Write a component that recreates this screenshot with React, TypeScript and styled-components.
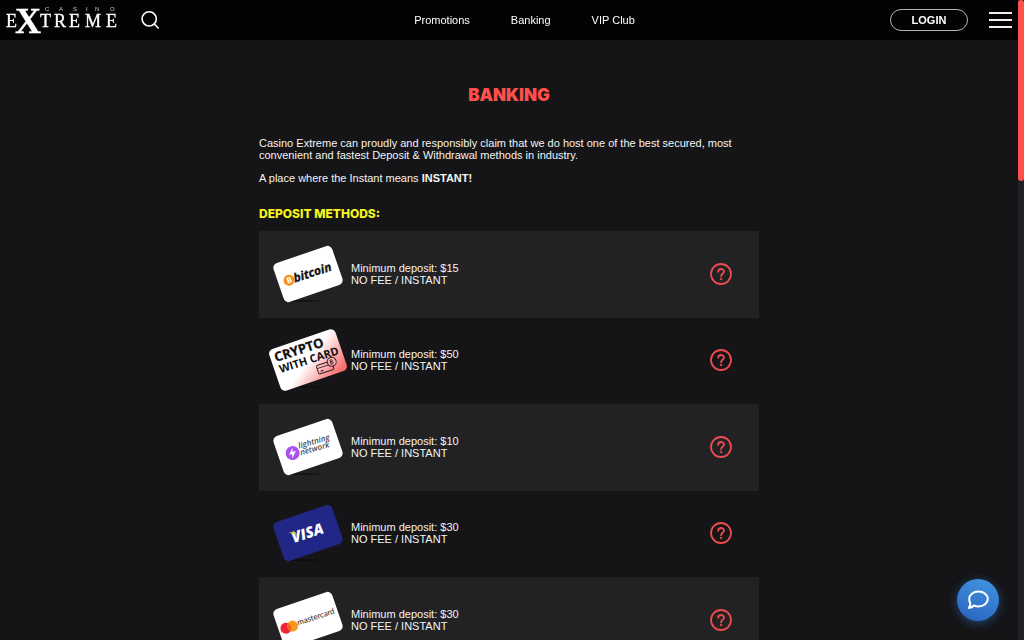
import React from "react";
import styled, { createGlobalStyle } from "styled-components";

const GlobalStyle = createGlobalStyle`
  * { box-sizing: border-box; }
  body {
    margin: 0;
    background: #151517;
    color: #f4f4f4;
    font: 11px/12px "Liberation Sans", Arial, sans-serif;
  }
`;

const Page = styled.div`
  height: 100vh;
  padding-right: 6px;
  overflow-y: auto;
  scrollbar-width: none;
`;

const Header = styled.header`
  position: sticky;
  top: 0;
  z-index: 2;
  display: flex;
  align-items: center;
  justify-content: space-between;
  height: 40px;
  padding: 0 6px;
  background: #030303;
`;

const Group = styled.div<{ $gap: number }>`
  display: flex;
  align-items: center;
  gap: ${(p) => p.$gap}px;
`;

const HomeLink = styled.a`
  display: block;
  height: 32px;
  color: #fff;
`;

const Nav = styled.nav`
  display: flex;
  gap: 41px;
`;

const NavLink = styled.a`
  color: #fff;
  text-decoration: none;
`;

const IconButton = styled.button`
  display: flex;
  align-items: center;
  justify-content: center;
  padding: 0;
  border: 0;
  background: none;
  color: inherit;
  cursor: pointer;
`;

const LoginButton = styled.button`
  width: 78px;
  height: 22px;
  padding: 0;
  border: 1px solid #b4b4b4;
  border-radius: 11px;
  background: transparent;
  color: #fff;
  font: bold 11px/12px "Liberation Sans", Arial, sans-serif;
  cursor: pointer;
`;

const Main = styled.main`
  max-width: 500px;
  margin: 0 auto;
  padding: 44px 0 40px;
`;

const Title = styled.h1`
  margin: 0 0 31px;
  color: #ff504c;
  font: 900 17px/22px Inter, "Liberation Sans", sans-serif;
  text-align: center;
`;

const Paragraph = styled.p`
  margin: 0 0 11px;
`;

const Subtitle = styled.h2`
  margin: 0 0 9px;
  padding-top: 11px;
  color: #f8f51c;
  font: 800 12px/16px Inter, "Liberation Sans", sans-serif;
`;

const MethodList = styled.ul`
  margin: 0;
  padding: 0;
  list-style: none;
`;

const MethodRow = styled.li`
  display: flex;
  align-items: center;
  height: 86px;
  padding: 0 27px 2px 9px;
  &:nth-child(odd) {
    height: 87px;
    background: #222224;
  }
`;

const MethodText = styled.p`
  flex: 1;
  margin: 0 0 0 3px;
`;

const HelpButton = styled(IconButton)`
  width: 22px;
  height: 22px;
  color: #ee4b4e;
`;

const ScrollTrack = styled.div`
  position: fixed;
  inset: 0 0 0 auto;
  z-index: 3;
  width: 6px;
  background: #1f2126;
`;

const ScrollThumb = styled.div`
  height: 181px;
  border-radius: 3px;
  background: #ff504c;
`;

const ChatButton = styled(IconButton)`
  position: fixed;
  right: 25px;
  bottom: 19px;
  width: 42px;
  height: 42px;
  border-radius: 50%;
  background: linear-gradient(200deg, #4296e0, #2a62c0);
  box-shadow: 0 2px 10px rgba(50, 120, 210, 0.5);
  color: #fff;
`;

const cardFont = '"Open Sans", "Noto Sans", sans-serif';

function Logo() {
  return (
    <svg width="112" height="32" viewBox="0 0 112 32" fill="#fff" role="img" aria-label="Casino Extreme" overflow="visible">
      <g fontFamily='"Liberation Serif", serif' fontSize="18" stroke="#fff" strokeWidth="0.3">
        <text x="0" y="23">E</text>
        <text x="9" y="29" fontSize="36" fontWeight="bold">X</text>
        <text x="34" y="23">T</text>
        <text x="48" y="23">R</text>
        <text x="63" y="23">E</text>
        <text x="79" y="23">M</text>
        <text x="100" y="23">E</text>
      </g>
      <g fontFamily='"Liberation Sans", sans-serif' fontSize="6" fill="#ccc">
        <text x="39" y="7">C</text>
        <text x="53" y="7">A</text>
        <text x="67" y="7">S</text>
        <text x="80" y="7">I</text>
        <text x="89" y="7">N</text>
        <text x="104" y="7">O</text>
      </g>
    </svg>
  );
}

function Card({ children, fill = "#fff", large = false }: { children: React.ReactNode; fill?: string; large?: boolean }) {
  const w = large ? 70 : 62;
  const h = large ? 44 : 41;
  return (
    <svg width="80" height="66" viewBox="-40 -33 80 66" aria-hidden="true">
      <ellipse cx="-6" cy="27" rx="18" ry="1" fill="#0c0c0d" opacity="0.6" />
      <g transform="rotate(-19)">
        <rect x={-w / 2} y={-h / 2} width={w} height={h} rx="5" fill={fill} />
      </g>
      <g transform="rotate(-18)" fontFamily={cardFont}>{children}</g>
    </svg>
  );
}

const bitcoinCard = (
  <Card>
    <circle cx="-20" cy="0" r="5.5" fill="#f7931a" />
    <text x="-22.6" y="2.8" fontSize="8" fontWeight="bold" fill="#fff">B</text>
    <text x="-15" y="4" fontSize="12" fontWeight="bold" fontStyle="italic" fill="#111" stroke="#111" strokeWidth="0.3">bitcoin</text>
  </Card>
);

const cryptoCard = (
  <Card fill="url(#blush)" large>
    <defs>
      <linearGradient id="blush" x1="0.6" y1="0.4" x2="1.05" y2="0.8">
        <stop offset="0" stopColor="#fff" />
        <stop offset="1" stopColor="#f76d6d" />
      </linearGradient>
    </defs>
    <g fill="#111" fontWeight="bold">
      <text x="-31" y="-8" fontSize="13" stroke="#111" strokeWidth="0.3">CRYPTO</text>
      <text x="-30" y="4" fontSize="11">WITH CARD</text>
    </g>
    <g fill="none" stroke="#3a1c1e" strokeWidth="1">
      <rect x="6" y="8" width="16" height="9" rx="1.5" />
      <path d="M6 11h12M8.500 14.500h3" />
      <circle cx="22" cy="9" r="4.500" fill="#f8b0b0" />
      <path d="M20.800 6.800v4.600M20.800 7h1.700q1.200 1-.2 2h-1.500h1.800q1.400 1.200 0 2.200h-1.800" strokeWidth=".8" />
    </g>
  </Card>
);

const lightningCard = (
  <Card>
    <circle cx="-16.500" cy="1" r="7" fill="#a952ef" />
    <path d="M-15-4l-5.500 5.800h3.300l-1.300 4.200 5.800-6h-3.500z" fill="#fff" />
    <g fill="#4a4a4e" fontSize="8" fontStyle="italic" fontWeight="600" transform="rotate(2)">
      <text x="-9" y="-1">lightning</text>
      <text x="-9" y="6">network</text>
    </g>
  </Card>
);

const visaCard = (
  <Card fill="#222787">
    <text x="-17" y="5" fontSize="15" fontWeight="800" fontStyle="italic" fill="#fff">VISA</text>
    <path d="M-18.500-6h5q1.500.2 1.800 1.800l.6 4q-2-4-7.400-5.800z" fill="#d9c64a" />
  </Card>
);

const mastercardCard = (
  <Card>
    <circle cx="-23.500" cy="1" r="5.500" fill="#ee2532" />
    <circle cx="-16.500" cy="1" r="5.500" fill="#f8991d" />
    <path d="M-20-3.200a5.500 5.500 0 0 1 0 8.400a5.500 5.500 0 0 1 0-8.400z" fill="#f4601e" />
    <text x="-11" y="2" fontSize="8" fontFamily="Lato, sans-serif" fill="#222">mastercard</text>
  </Card>
);

const methods = [
  { name: "Bitcoin", minimum: 15, card: bitcoinCard },
  { name: "Crypto with card", minimum: 50, card: cryptoCard },
  { name: "Lightning network", minimum: 10, card: lightningCard },
  { name: "Visa", minimum: 30, card: visaCard },
  { name: "Mastercard", minimum: 30, card: mastercardCard },
];

export default function App() {
  return (
    <>
      <GlobalStyle />
      <Page>
        <Header>
          <Group $gap={23}>
            <HomeLink href="#"><Logo /></HomeLink>
            <IconButton aria-label="Search">
              <svg width="18" height="18" viewBox="0 0 18 18" fill="none" stroke="#fff" strokeWidth="1.600" strokeLinecap="round">
                <circle cx="8.200" cy="7.900" r="7.100" />
                <path d="M13.300 13l3.900 4" />
              </svg>
            </IconButton>
          </Group>
          <Nav>
            <NavLink href="#promotions">Promotions</NavLink>
            <NavLink href="#banking">Banking</NavLink>
            <NavLink href="#vip">VIP Club</NavLink>
          </Nav>
          <Group $gap={21}>
            <LoginButton>LOGIN</LoginButton>
            <IconButton aria-label="Menu">
              <svg width="23" height="16" viewBox="0 0 23 16" fill="#eee">
                <path d="M0 0h23v2H0zM0 7h23v2H0zM0 14h23v2H0z" />
              </svg>
            </IconButton>
          </Group>
        </Header>
        <Main>
          <Title>BANKING</Title>
          <Paragraph>
            Casino Extreme can proudly and responsibly claim that we do host one of the best secured, most convenient
            and fastest Deposit &amp; Withdrawal methods in industry.
          </Paragraph>
          <Paragraph>
            A place where the Instant means <strong>INSTANT!</strong>
          </Paragraph>
          <Subtitle>DEPOSIT METHODS:</Subtitle>
          <MethodList>
            {methods.map((m) => (
              <MethodRow key={m.name}>
                {m.card}
                <MethodText>
                  Minimum deposit: ${m.minimum}
                  <br />
                  NO FEE / INSTANT
                </MethodText>
                <HelpButton aria-label={`About ${m.name}`}>
                  <svg width="22" height="22" viewBox="0 0 22 22" fill="none" stroke="currentColor" strokeWidth="1.800" strokeLinecap="round">
                    <circle cx="11" cy="11" r="10" />
                    <path d="M8.200 8.800c0-3.800 5.800-3.600 5.800-.2c0 2.200-2.900 2.200-2.900 4.600" />
                    <circle cx="11.100" cy="16" r="0.400" />
                  </svg>
                </HelpButton>
              </MethodRow>
            ))}
          </MethodList>
        </Main>
      </Page>
      <ScrollTrack>
        <ScrollThumb />
      </ScrollTrack>
      <ChatButton aria-label="Chat">
        <svg width="22" height="20" viewBox="0 0 22 20" fill="none" stroke="#fff" strokeWidth="2" strokeLinejoin="round">
          <path d="M11.500 1.500c5.300 0 9.300 3.300 9.300 7.500s-4 7.500-9.300 7.500c-1.700 0-3.200-.3-4.600-1c-1.300 1.400-3 2.300-5.100 2.500c1-1.300 1.500-2.800 1.600-4.600c-.8-1.300-1.200-2.800-1.200-4.400c0-4.200 4-7.500 9.300-7.500z" />
        </svg>
      </ChatButton>
    </>
  );
}
